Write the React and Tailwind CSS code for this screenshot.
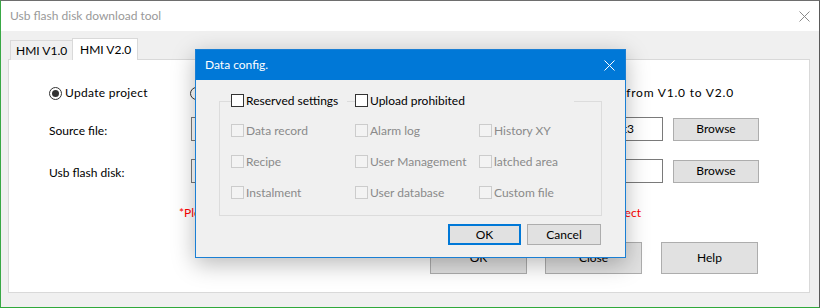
import React from 'react';

const Check = ({ label, disabled, wide }) => (
  <div className={`flex items-center gap-[2px] h-[13px] bg-[#f0f0f0] ${wide}`}>
    <span
      className={`w-[13px] h-[13px] shrink-0 border ${disabled ? 'border-[#cccccc] bg-[#f3f3f3]' : 'border-[#333333] bg-white'}`}
    />
    <span className={`text-[12px] leading-none whitespace-nowrap ${disabled ? 'text-[#8a8a8a]' : 'text-black'}`}>{label}</span>
  </div>
);

const Radio = ({ label, checked, wide, labelClass = '' }) => (
  <div className={`flex items-center gap-[3px] ${wide}`}>
    <span className="w-[13px] h-[13px] rounded-full border border-[#333333] bg-white flex items-center justify-center shrink-0">
      {checked && <span className="w-[7px] h-[7px] rounded-full bg-[#333333]" />}
    </span>
    <span className={`text-[12px] whitespace-nowrap ${labelClass}`}>{label}</span>
  </div>
);

const WinButton = ({ children, className }) => (
  <div className={`flex items-center justify-center bg-[#e1e1e1] border border-[#adadad] text-[12px] text-black ${className}`}>
    {children}
  </div>
);

const CloseGlyph = ({ color }) => (
  <svg width="11" height="11" viewBox="0 0 11 11">
    <path d="M0.5 0.5 L10.5 10.5 M10.5 0.5 L0.5 10.5" stroke={color} strokeWidth="1" />
  </svg>
);

export default function App() {
  const disabledItems = [
    'Data record', 'Alarm log', 'History XY',
    'Recipe', 'User Management', 'latched area',
    'Instalment', 'User database', 'Custom file',
  ];

  return (
    <div className="relative w-[820px] h-[308px] overflow-hidden font-['Lato',sans-serif] text-black">
      <div className="flex flex-col w-full h-full bg-[#f0f0f0] border-t border-t-[#6e6e6e] border-l border-l-[#39a845] border-r border-r-[#5a5a5a] border-b border-b-[#2fa93a]">
        {/* title bar */}
        <div className="h-[30px] bg-white flex items-center justify-between pl-[9px] pr-[9px] shrink-0">
          <span className="text-[12px] text-[#999999]">Usb flash disk download tool</span>
          <CloseGlyph color="#8a8a8a" />
        </div>

        {/* tabs */}
        <div className="flex items-end pl-[9px] pt-[7px] h-[29px] shrink-0 relative z-10">
          <div className="h-[20px] w-[62px] border-l border-t border-[#d9d9d9] bg-[#f0f0f0] flex items-center pl-[5px] text-[12px]">
            HMI V1.0
          </div>
          <div className="h-[22px] w-[66px] border-l border-t border-r border-[#d9d9d9] bg-white flex items-center pl-[7px] text-[12px]">
            HMI V2.0
          </div>
        </div>

        {/* tab panel */}
        <div className="mx-[7px] mr-[9px] -mt-px h-[234px] border border-[#d9d9d9] bg-white flex flex-col">
          <div className="mt-[23px] h-[20px] flex items-center pl-[40px]">
            <Radio label="Update project" checked wide="w-[141px]" labelClass="tracking-[0.3px]" />
            <Radio label="Update firmware" wide="w-[322px]" />
            <Radio label="Convert project from V1.0 to V2.0" labelClass="tracking-[0.8px]" />
          </div>

          <div className="mt-[14px] h-[24px] flex items-center pl-[40px]">
            <span className="w-[142px] pt-[4px] text-[12px]">Source file:</span>
            <div className="w-[472px] h-[24px] border border-[#7a7a7a] flex items-center justify-between pl-[3px] pr-[28px] text-[12px] overflow-hidden whitespace-nowrap">
              <span>D:\HMI</span>
              <span>Demo\project_test3</span>
            </div>
            <WinButton className="ml-[10px] w-[86px] h-[23px]">Browse</WinButton>
          </div>

          <div className="mt-[18px] h-[24px] flex items-center pl-[40px]">
            <span className="w-[142px] pt-[4px] text-[12px]">Usb flash disk:</span>
            <div className="w-[472px] h-[24px] border border-[#7a7a7a]" />
            <WinButton className="ml-[10px] w-[86px] h-[23px]">Browse</WinButton>
          </div>

          <div className="mt-[22px] h-[16px] ml-[170px] w-[462px] flex items-center justify-between text-[12px] text-[#ff0000] whitespace-nowrap">
            <span>*Please insert the usb flash disk</span>
            <span>before you update the project</span>
          </div>

          <div className="mt-[21px] flex pl-[421px] gap-[18px]">
            <WinButton className="w-[97px] h-[32px]">OK</WinButton>
            <WinButton className="w-[97px] h-[32px]">Close</WinButton>
            <WinButton className="w-[97px] h-[32px] ml-px">Help</WinButton>
          </div>
        </div>
      </div>

      {/* modal dialog */}
      <div className="absolute left-[195px] top-[49px] w-[431px] h-[209px] border border-[#1a7fd4] bg-[#f0f0f0] flex flex-col shadow-[0_6px_22px_rgba(0,0,0,0.28)]">
        <div className="h-[30px] bg-[#0078d7] flex items-center justify-between pl-[9px] pr-[10px] shrink-0">
          <span className="text-[12px] text-white">Data config.</span>
          <CloseGlyph color="#ffffff" />
        </div>

        <div className="flex flex-col pl-[23px] pr-[23px] pt-[21px]">
          <div className="h-[115px] border border-[#dcdcdc]">
            <div className="-mt-[8px] pl-[11px] flex items-center">
              <Check label="Reserved settings" wide="w-[116px]" />
              <span className="w-[8px]" />
              <Check label="Upload prohibited" wide="w-[219px]" />
            </div>
            <div className="mt-[17px] pl-[11px] grid grid-cols-[124px_124px_1fr] gap-y-[18px]">
              {disabledItems.map((item) => (
                <Check key={item} label={item} disabled />
              ))}
            </div>
          </div>

          <div className="mt-[8px] flex justify-end gap-[6px] pr-px">
            <div className="w-[73px] h-[21px] flex items-center justify-center bg-[#e1e1e1] border-2 border-[#0078d7] text-[12px]">OK</div>
            <WinButton className="w-[74px] h-[21px]">Cancel</WinButton>
          </div>
        </div>
      </div>
    </div>
  );
}
